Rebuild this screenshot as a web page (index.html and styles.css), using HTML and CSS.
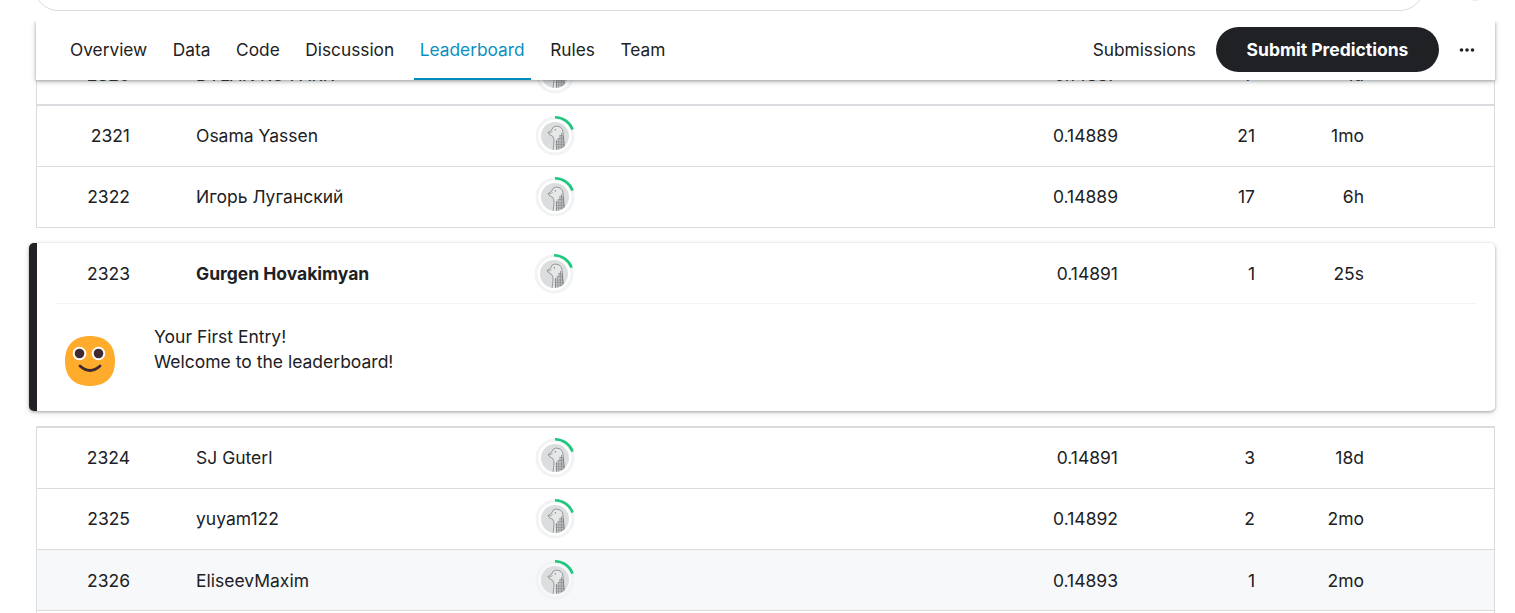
FILE: index.html
```html
<!DOCTYPE html>
<html lang="en">

<head>
    <meta charset="UTF-8">
    <title>Leaderboard</title>
    <link rel="stylesheet" href="styles.css">
</head>

<body>
    <svg class="defs" width="0" height="0">
        <clipPath id="goose-clip"><circle cx="20" cy="20" r="14"/></clipPath>
        <symbol id="goose" viewBox="0 0 40 40">
            <circle cx="20" cy="20" r="18" fill="none" stroke="#f1f3f4" stroke-width="3"/>
            <path d="M20 1.3 A18.7 18.7 0 0 1 37.6 13.6" fill="none" stroke="#1fc77e" stroke-width="2.6"/>
            <circle cx="20" cy="20" r="14" fill="#dcdddf"/>
            <g clip-path="url(#goose-clip)">
                <path d="M13 16.7 L16.5 14.3 Q17.5 10.3 21 10 Q26 10 27.5 13.5 Q28.5 18 28.6 23 L30 35 H18 L19 26 Q19.4 22.5 17.5 20.2 Q14.5 19.5 13 16.7 Z" fill="#e6e7e7" stroke="#66696c" stroke-width=".6"/>
                <path d="M21.5 24 V34 M23.2 22 V34 M25 19 V34 M26.7 17 V34 M28.2 20 V34" stroke="#66696c" stroke-width=".7" fill="none"/>
                <path d="M20.5 26 H29 M20.5 28.5 H29.5 M20.5 31 H29.5 M23.5 22.5 H28.5 M25 19.5 H28" stroke="#7d8084" stroke-width=".5" fill="none"/>
                <path d="M13.6 17 Q16 16.8 17.6 15.6" stroke="#66696c" stroke-width=".5" fill="none"/>
            </g>
            <circle cx="20.3" cy="13.8" r=".6" fill="#4a4d50"/>
        </symbol>
    </svg>

    <div class="search-box"></div>
    <div class="search-side"></div>

    <nav class="tabs">
        <a href="#">Overview</a>
        <a href="#">Data</a>
        <a href="#">Code</a>
        <a href="#">Discussion</a>
        <a href="#" class="active">Leaderboard</a>
        <a href="#">Rules</a>
        <a href="#">Team</a>
        <a href="#" class="submissions">Submissions</a>
        <button class="submit">Submit Predictions</button>
        <span class="more">
            <svg width="16" height="4" viewBox="0 0 16 4"><circle cx="2.5" cy="2" r="1.8"/><circle cx="8" cy="2" r="1.8"/><circle cx="13.5" cy="2" r="1.8"/></svg>
        </span>
    </nav>

    <div class="table table-top">
        <div class="row last-before-gap">
            <span>2320</span><span class="name">DYLAN KO PARK</span><svg class="avatar"><use href="#goose"/></svg><span class="num">0.14887</span><span class="num">7</span><span class="num">1d</span>
        </div>
        <div class="row">
            <span>2321</span><span class="name">Osama Yassen</span><svg class="avatar"><use href="#goose"/></svg><span class="num">0.14889</span><span class="num">21</span><span class="num">1mo</span>
        </div>
        <div class="row">
            <span>2322</span><span class="name">Игорь Луганский</span><svg class="avatar"><use href="#goose"/></svg><span class="num">0.14889</span><span class="num">17</span><span class="num">6h</span>
        </div>
    </div>

    <div class="card">
        <div class="row own">
            <span>2323</span><strong class="name">Gurgen Hovakimyan</strong><svg class="avatar"><use href="#goose"/></svg><span class="num">0.14891</span><span class="num">1</span><span class="num">25s</span>
        </div>
        <div class="welcome">
            <svg class="smile" width="50" height="50" viewBox="0 0 50 50">
                <path d="M25 0 C41 0 50 9 50 25 C50 41 41 50 25 50 C9 50 0 41 0 25 C0 9 9 0 25 0 Z" fill="#ffac2d"/>
                <circle cx="14.5" cy="17.5" r="6.8" fill="#fff"/>
                <circle cx="33.5" cy="17.5" r="6.8" fill="#fff"/>
                <circle cx="14.5" cy="17.5" r="4.8" fill="#402a32"/>
                <circle cx="33.5" cy="17.5" r="4.8" fill="#402a32"/>
                <path d="M15 30 Q25 39 35 30" fill="none" stroke="#402a32" stroke-width="2.8" stroke-linecap="round"/>
            </svg>
            <p>Your First Entry!<br>Welcome to the leaderboard!</p>
        </div>
    </div>

    <div class="table table-bottom">
        <div class="row">
            <span>2324</span><span class="name">SJ Guterl</span><svg class="avatar"><use href="#goose"/></svg><span class="num">0.14891</span><span class="num">3</span><span class="num">18d</span>
        </div>
        <div class="row">
            <span>2325</span><span class="name">yuyam122</span><svg class="avatar"><use href="#goose"/></svg><span class="num">0.14892</span><span class="num">2</span><span class="num">2mo</span>
        </div>
        <div class="row hover">
            <span>2326</span><span class="name">EliseevMaxim</span><svg class="avatar"><use href="#goose"/></svg><span class="num">0.14893</span><span class="num">1</span><span class="num">2mo</span>
        </div>
        <div class="row-end"></div>
    </div>
</body>

</html>
```

FILE: styles.css
```css
html, body {
    height: 613px;
    overflow: hidden;
}

body {
    margin: 0;
    background-color: #fff;
    font-family: Inter, "Noto Sans", sans-serif;
    font-size: 17.5px;
    color: #202124;
    position: relative;
}

.defs {
    position: absolute;
}

.search-box {
    height: 50px;
    margin: -39px 91px 0 34px;
    border: 1px solid #dadce0;
    border-radius: 24px;
    box-sizing: border-box;
}

.search-side {
    position: absolute;
    top: -31px;
    left: 1459px;
    width: 32px;
    height: 32px;
    box-sizing: border-box;
    border-radius: 50%;
    border: 1px solid #e8eaed;
}

.tabs {
    position: relative;
    z-index: 2;
    display: flex;
    align-items: center;
    height: 59px;
    margin: 10px 20px 0 36px;
    padding: 0 20px 0 28px;
    background-color: #fff;
    box-shadow: 0 1px 3px rgba(60, 64, 67, 0.4), 0 2px 6px rgba(60, 64, 67, 0.2);
    clip-path: inset(0 -12px -12px -12px);
}

.tabs a {
    display: flex;
    align-items: center;
    height: 100%;
    box-sizing: border-box;
    padding: 0 6px;
    margin-right: 13.6px;
    border-bottom: 2px solid transparent;
    color: #202124;
    text-decoration: none;
    font-size: 17.3px;
}

.tabs a.active {
    color: #0a8fc0;
    border-bottom-color: #008abc;
}

.tabs a.submissions {
    margin-left: auto;
    margin-right: 14px;
}

.submit {
    width: 223px;
    height: 45px;
    margin: 0 20px 2px 0;
    border: none;
    border-radius: 23px;
    background-color: #202124;
    color: #fff;
    font-family: inherit;
    font-size: 17.5px;
    font-weight: 700;
}

.more {
    display: flex;
    margin-bottom: 2px;
    fill: #202124;
}

.table {
    margin: 0 20px 0 36px;
    border-left: 1px solid #dadce0;
    border-right: 1px solid #dadce0;
}

.table-top {
    margin-top: -36px;
}

.row {
    display: grid;
    grid-template-columns: 93px 405px 440px 143px 137px 109px 1fr;
    align-items: center;
    height: 60px;
    text-align: right;
    border-bottom: 1px solid #dadce0;
}

.row span {
    margin-bottom: 2px;
}

.last-before-gap {
    border-bottom-width: 2px;
}

.name {
    padding-left: 66px;
    text-align: left;
}

.avatar {
    width: 40px;
    height: 40px;
}

.row.last-before-gap span,
.row.hover span,
.row.own span {
    margin-bottom: 0;
}

.hover {
    background-color: #f7f8fa;
}

.row-end {
    height: 2px;
}

.card {
    margin: 15px 20px 15px 29px;
    border-left: 8px solid #202124;
    border-radius: 5px;
    background-color: #fff;
    box-shadow: 0 1px 3px rgba(60, 64, 67, 0.4), 0 2px 6px rgba(60, 64, 67, 0.15);
}

.own {
    height: 61px;
    grid-template-columns: 93px 404px 441px 143px 137px 109px 1fr;
    border-bottom: 0;
    position: relative;
}

.own::after {
    content: "";
    position: absolute;
    left: 19px;
    right: 19px;
    bottom: 0;
    height: 1px;
    background-color: #f1f3f4;
}

.welcome {
    display: flex;
    align-items: center;
    gap: 39px;
    height: 107px;
    padding-left: 28px;
}

.welcome p {
    margin: 0;
    line-height: 25px;
    padding-bottom: 17px;
}

.smile {
    flex: none;
    margin-top: 6px;
}

.table-bottom {
    border-top: 2px solid #dadce0;
}
```
